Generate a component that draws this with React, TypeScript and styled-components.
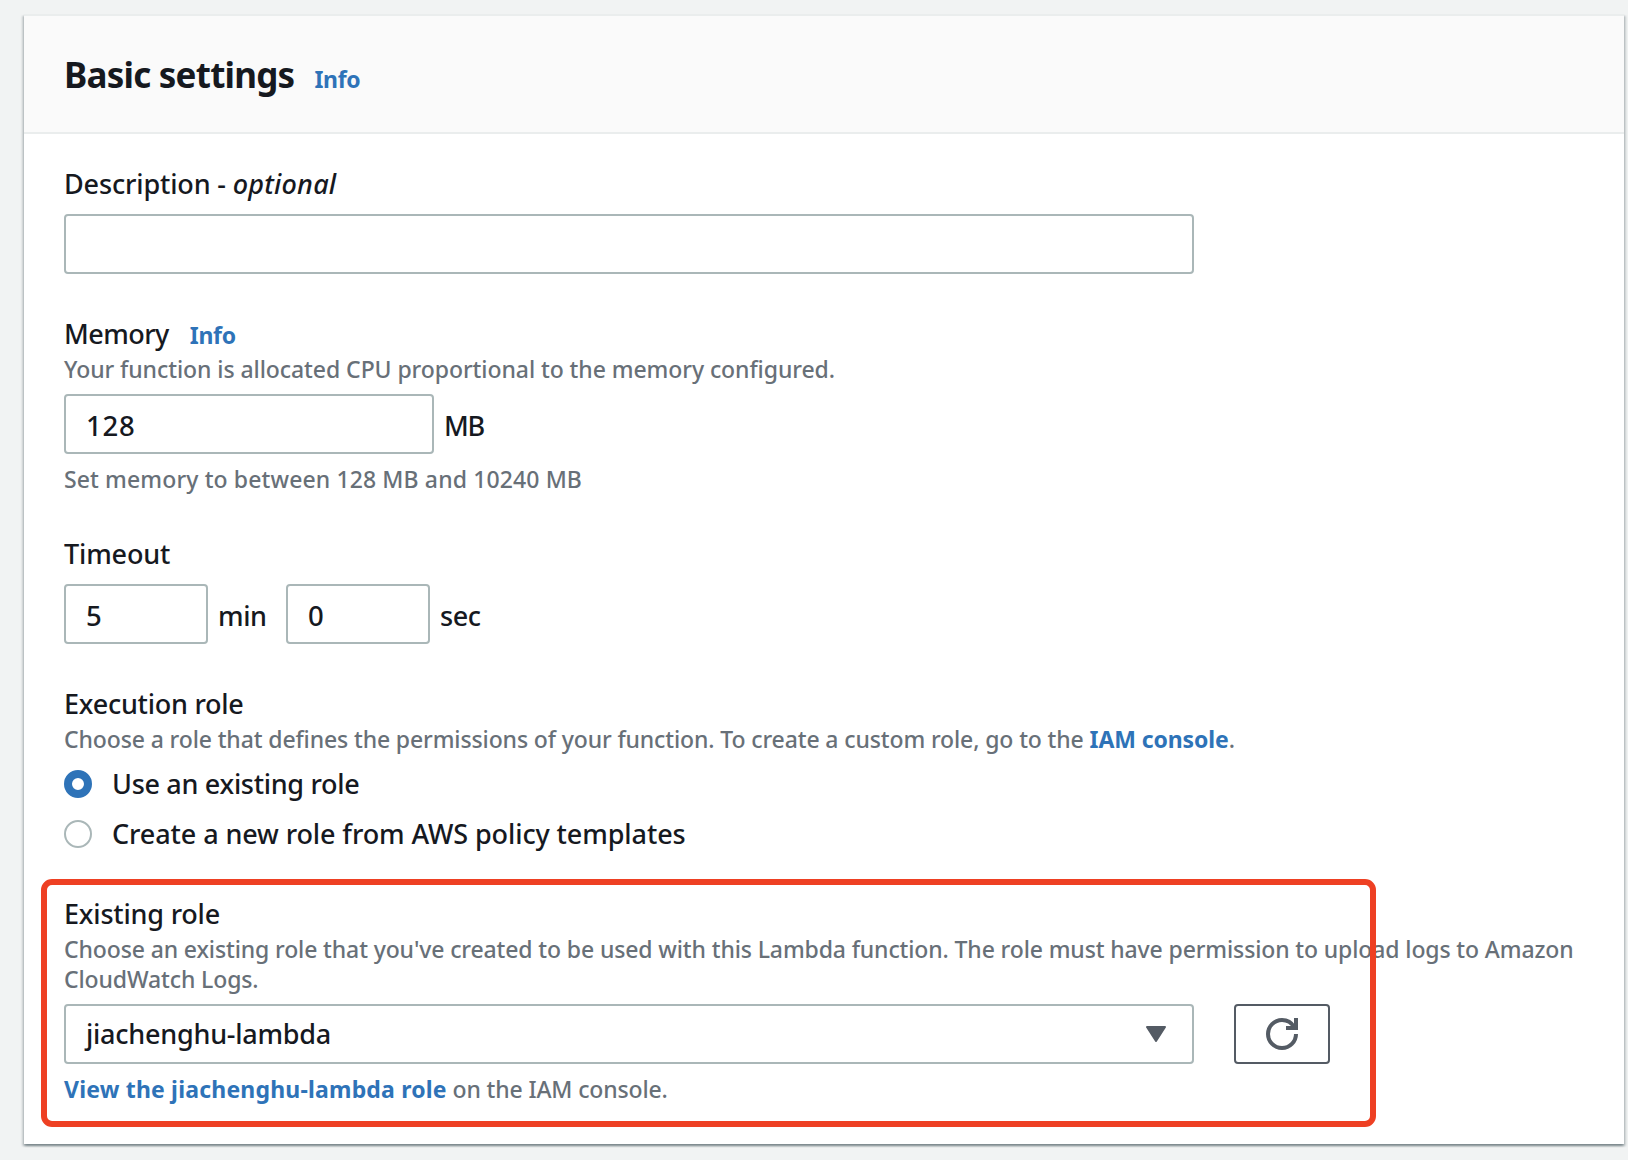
import React from 'react';
import styled, { createGlobalStyle } from 'styled-components';

const GlobalStyle = createGlobalStyle`
  * { box-sizing: border-box; }
  body {
    margin: 0;
    background: #f1f3f3;
    color: #16191f;
    font-family: "Noto Sans", "Open Sans", sans-serif;
  }
`;

const Page = styled.main`
  min-height: 1160px;
  padding: 14px 4px 16px 24px;
`;

const Card = styled.section`
  position: relative;
  height: 1130px;
  border-top: 2px solid #eaeded;
  background: #fff;
  box-shadow:
    0 2px 2px rgba(0, 28, 36, 0.3),
    2px 2px 2px rgba(0, 28, 36, 0.15),
    -2px 2px 2px rgba(0, 28, 36, 0.15);
`;

const CardHeader = styled.header`
  display: flex;
  align-items: baseline;
  gap: 20px;
  height: 118px;
  padding: 34px 40px 0;
  border-bottom: 2px solid #eaeded;
  background: #fafafa;
`;

const Title = styled.h2`
  margin: 0;
  font-size: 35px;
  line-height: 50px;
  font-weight: 700;
  letter-spacing: -0.77px;
`;

const Body = styled.div`
  display: flex;
  flex-direction: column;
  gap: 42px;
  padding: 32px 40px 40px;
`;

const Field = styled.div<{ $offset?: number }>`
  display: flex;
  flex-direction: column;
  margin-top: ${p => p.$offset ?? 0}px;
`;

const LabelRow = styled.div`
  display: flex;
  align-items: baseline;
  gap: 21px;
  height: 36px;
`;

const Text = styled.span<{ $spacing?: number }>`
  font-size: 27px;
  line-height: 36px;
  font-weight: 500;
  letter-spacing: ${p => p.$spacing ?? 0}px;
  white-space: pre;
`;

const Optional = styled.i`
  letter-spacing: 0.2px;
`;

const Hint = styled.p<{ $spacing?: number }>`
  margin: 2px 0 0;
  color: #687078;
  font-size: 23px;
  line-height: 30px;
  font-weight: 500;
  letter-spacing: ${p => p.$spacing ?? 0}px;
`;

const Link = styled.a<{ $spacing?: number }>`
  color: #2e73b8;
  font-size: 23px;
  line-height: 30px;
  font-weight: 700;
  letter-spacing: ${p => p.$spacing ?? 0}px;
  text-decoration: none;
`;

const ControlRow = styled.div<{ $top: number }>`
  display: flex;
  align-items: center;
  margin-top: ${p => p.$top}px;
`;

const Input = styled.input<{ $width: number }>`
  width: ${p => p.$width}px;
  height: 60px;
  padding: 2px 20px 0;
  border: 2px solid #aab7b8;
  border-radius: 4px;
  outline: none;
  background: #fff;
  color: #16191f;
  font: 500 27.5px/36px "Noto Sans", "Open Sans", sans-serif;
  letter-spacing: 0.8px;
`;

const Unit = styled.span<{ $width?: number; $spacing?: number }>`
  width: ${p => (p.$width ? `${p.$width}px` : 'auto')};
  padding: 4px 0 0 10px;
  font-size: 27px;
  line-height: 36px;
  font-weight: 500;
  letter-spacing: ${p => p.$spacing ?? -0.4}px;
`;

const RadioGroup = styled.div`
  display: flex;
  flex-direction: column;
  gap: 14px;
  margin-top: 12px;
`;

const RadioOption = styled.label`
  display: flex;
  align-items: center;
  gap: 20px;
  height: 36px;
`;

const RadioMark = styled.span<{ $checked?: boolean }>`
  width: 28px;
  height: 28px;
  border: ${p => (p.$checked ? '8px solid #2e73b8' : '2px solid #aab7b8')};
  border-radius: 50%;
  background: #fff;
`;

const Select = styled.div`
  display: flex;
  align-items: center;
  justify-content: space-between;
  width: 1130px;
  height: 60px;
  padding: 0 26px 0 20px;
  border: 2px solid #aab7b8;
  border-radius: 4px;
  background: #fff;
`;

const RefreshButton = styled.button`
  display: flex;
  align-items: center;
  justify-content: center;
  width: 96px;
  height: 60px;
  margin-left: 40px;
  padding: 0;
  border: 2px solid #545b64;
  border-radius: 4px;
  background: #fff;
`;

const Highlight = styled.div`
  position: absolute;
  top: 863px;
  left: 17px;
  width: 1335px;
  height: 247.5px;
  border: 6px solid #ee4023;
  border-radius: 11px;
  pointer-events: none;
`;

const CaretIcon = () => (
  <svg width="20" height="16" viewBox="0 0 20 16">
    <path d="M1 1H19L10 15Z" fill="#545b64" stroke="#545b64" strokeWidth="2" strokeLinejoin="round" />
  </svg>
);

const RefreshIcon = () => (
  <svg width="32" height="32" viewBox="0 0 32 32" fill="none" stroke="#545b64" strokeWidth="4">
    <path d="M30 16A14 14 0 1 1 16 2C21.2 2 25.6 4.6 28.2 9" />
    <path d="M30 0V10H20" />
  </svg>
);

export default function App() {
  return (
    <>
      <GlobalStyle />
      <Page>
        <Card>
          <CardHeader>
            <Title>Basic settings</Title>
            <Link $spacing={-0.3}>Info</Link>
          </CardHeader>
          <Body>
            <Field>
              <LabelRow>
                <Text $spacing={-0.15}>Description - <Optional>optional</Optional></Text>
              </LabelRow>
              <ControlRow $top={12}>
                <Input $width={1130} />
              </ControlRow>
            </Field>

            <Field>
              <LabelRow>
                <Text $spacing={-0.55}>Memory</Text>
                <Link $spacing={-0.3}>Info</Link>
              </LabelRow>
              <Hint $spacing={-0.07}>Your function is allocated CPU proportional to the memory configured.</Hint>
              <ControlRow $top={10}>
                <Input $width={370} defaultValue="128" />
                <Unit $spacing={-1.3}>MB</Unit>
              </ControlRow>
              <ControlRow $top={8}>
                <Hint $spacing={0.12}>Set memory to between 128 MB and 10240 MB</Hint>
              </ControlRow>
            </Field>

            <Field>
              <LabelRow>
                <Text $spacing={-0.15}>Timeout</Text>
              </LabelRow>
              <ControlRow $top={12}>
                <Input $width={144} defaultValue="5" />
                <Unit $width={78}>min</Unit>
                <Input $width={144} defaultValue="0" />
                <Unit>sec</Unit>
              </ControlRow>
            </Field>

            <Field>
              <LabelRow>
                <Text $spacing={-0.25}>Execution role</Text>
              </LabelRow>
              <Hint $spacing={-0.12}>
                Choose a role that defines the permissions of your function. To create a custom role, go to the{' '}
                <Link $spacing={-0.1}>IAM console</Link>.
              </Hint>
              <RadioGroup>
                <RadioOption>
                  <RadioMark $checked />
                  <Text $spacing={-0.3}>Use an existing role</Text>
                </RadioOption>
                <RadioOption>
                  <RadioMark />
                  <Text $spacing={-0.1}>Create a new role from AWS policy templates</Text>
                </RadioOption>
              </RadioGroup>
            </Field>

            <Field $offset={2}>
              <LabelRow>
                <Text $spacing={-0.2}>Existing role</Text>
              </LabelRow>
              <Hint $spacing={-0.123}>
                Choose an existing role that you've created to be used with this Lambda function. The role must have permission to upload logs to Amazon
                <br />
                CloudWatch Logs.
              </Hint>
              <ControlRow $top={10}>
                <Select>
                  <Text $spacing={-0.24}>jiachenghu-lambda</Text>
                  <CaretIcon />
                </Select>
                <RefreshButton aria-label="Refresh">
                  <RefreshIcon />
                </RefreshButton>
              </ControlRow>
              <ControlRow $top={8}>
                <Hint $spacing={-0.15}>
                  <Link $spacing={0.19}>View the jiachenghu-lambda role</Link> on the IAM console.
                </Hint>
              </ControlRow>
            </Field>
          </Body>
          <Highlight />
        </Card>
      </Page>
    </>
  );
}
